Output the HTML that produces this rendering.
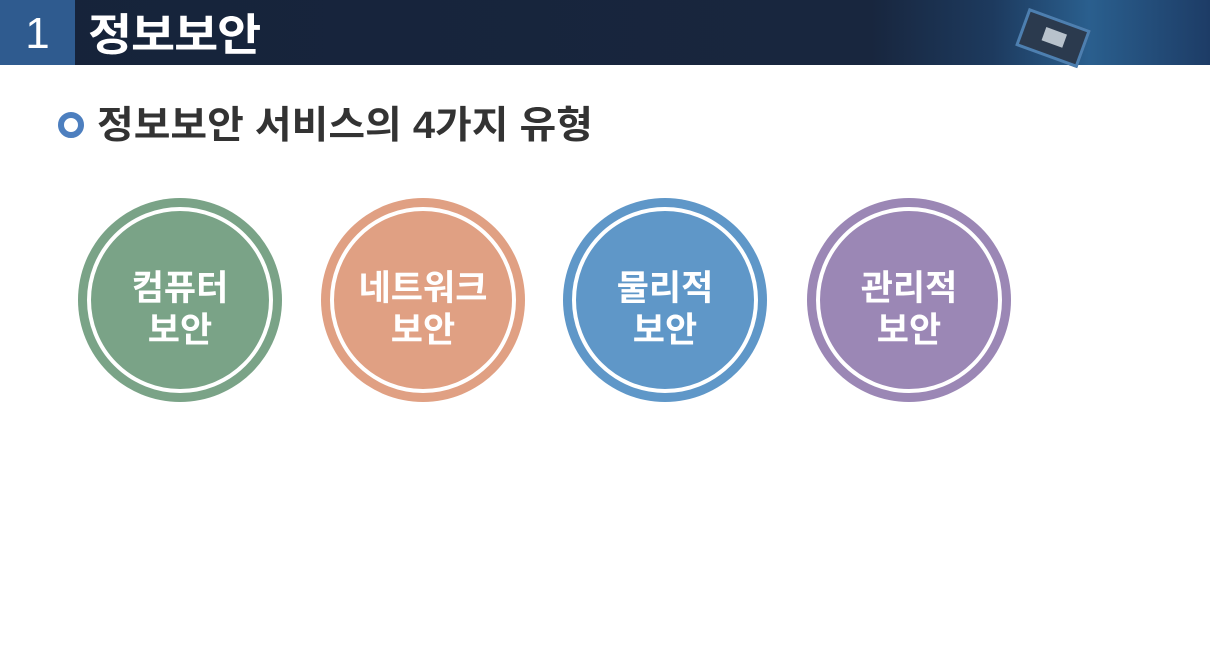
<!DOCTYPE html>
<html><head><meta charset="utf-8"><style>
body{margin:0;width:1210px;height:652px;background:#fff;position:relative;overflow:hidden;font-family:"Liberation Sans","Noto Sans CJK KR",sans-serif}
.hdr{position:absolute;left:0;top:0;width:1210px;height:65px;background:linear-gradient(90deg,#16233a 0%,#18263e 72%,#1d3a5e 82%,#2a5f8e 90%,#1d3c66 100%)}
.num{position:absolute;left:0;top:0;width:75px;height:65px;background:#2f5b8f;color:#fff;font-size:44px;text-align:center;line-height:68px}
.ttl{position:absolute;left:88px;top:8px;color:#fff;font-size:44px;font-weight:bold;line-height:56px;letter-spacing:-1px;transform:scaleX(1.09);transform-origin:left}
.chip{position:absolute;left:1020px;top:18px;width:60px;height:34px;background:#2b3a4e;transform:rotate(20deg);border:3px solid #4d7fb0}
.chip:after{content:"";position:absolute;left:20px;top:9px;width:22px;height:14px;background:#b8c2cc}
.sub{position:absolute;left:97px;top:101px;font-size:38px;font-weight:bold;color:#333;line-height:50px;white-space:nowrap;transform:scaleX(1.05);transform-origin:left}
.bul{position:absolute;left:58px;top:112px;width:14px;height:14px;border:6px solid #4d7fbf;border-radius:50%}
.c{position:absolute;top:198px;width:204px;height:204px;border-radius:50%}
.c i{position:absolute;left:9px;top:9px;width:178px;height:178px;border:4px solid #fff;border-radius:50%}
.c span{position:absolute;left:0;top:10px;width:204px;height:204px;display:flex;align-items:center;justify-content:center;text-align:center;color:#fff;font-size:35px;font-weight:bold;line-height:42px;white-space:nowrap}
</style></head><body>
<div class="hdr"></div><div class="chip"></div>
<div class="num">1</div><div class="ttl">정보보안</div>
<div class="bul"></div><div class="sub">정보보안 서비스의 4가지 유형</div>
<div class="c" style="left:78px;background:#7aa387"><i></i><span>컴퓨터<br>보안</span></div>
<div class="c" style="left:321px;background:#e0a083"><i></i><span>네트워크<br>보안</span></div>
<div class="c" style="left:563px;background:#5f97c8"><i></i><span>물리적<br>보안</span></div>
<div class="c" style="left:807px;background:#9b87b5"><i></i><span>관리적<br>보안</span></div>
</body></html>
